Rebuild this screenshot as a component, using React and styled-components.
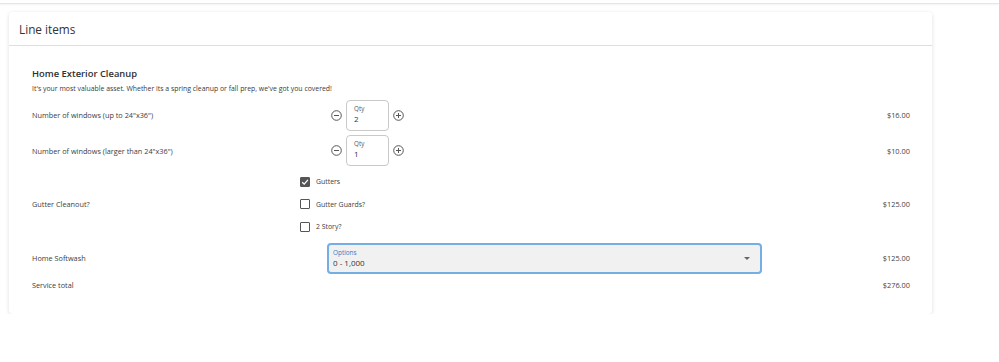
import React from "react";
import styled, { createGlobalStyle } from "styled-components";

const Global = createGlobalStyle`
  body {
    margin: 0;
    background: #fff;
    font-family: "Open Sans", "Liberation Sans", sans-serif;
    color: #3a3a3a;
  }
`;

// Barra fina de arriba
const TopStrip = styled.div`
  height: 3px;
  border-bottom: 1px solid #e6e6e6;
  box-shadow: 0 1px 2px rgba(0, 0, 0, 0.05);
`;

const Page = styled.div`
  padding: 8px 0 0 9px;
`;

const Card = styled.section`
  width: 923px;
  background: #fff;
  border-radius: 4px;
  box-shadow: 0 1px 4px rgba(0, 0, 0, 0.13);
`;

const CardHeader = styled.header`
  height: 33px;
  display: flex;
  align-items: center;
  padding-left: 10px;
  border-bottom: 1px solid #dedede;
  font-size: 11.8px;
  color: #333;
`;

const CardBody = styled.div`
  padding: 21px 22px 22px 23px;
  display: flex;
  flex-direction: column;
  gap: 4.5px;
`;

const Intro = styled.div`
  margin-bottom: 1px;
`;

const ItemTitle = styled.h2`
  margin: 0;
  font-size: 9.4px;
  line-height: 14px;
  font-weight: 600;
  color: #2f2f2f;
`;

const ItemDesc = styled.p`
  margin: 3px 0 0;
  font-size: 6.9px;
  line-height: 10px;
  color: #3a3a3a;
`;

const Row = styled.div`
  display: grid;
  grid-template-columns: 268px 1fr auto;
  align-items: center;
  min-height: ${(p) => p.$h || 14}px;
`;

const Label = styled.div`
  font-size: 7.3px;
  color: #3d3d3d;
`;

const Price = styled.div`
  font-size: 7.4px;
  color: #444;
  text-align: right;
`;

const Stepper = styled.div`
  display: flex;
  align-items: center;
  gap: 4px;
  margin-left: 31px;
`;

const IconBtn = styled.button`
  border: none;
  background: none;
  padding: 0;
  width: 11px;
  height: 11px;
  display: flex;
  cursor: pointer;
`;

const QtyBox = styled.div`
  width: 43px;
  height: 31px;
  box-sizing: border-box;
  border: 1px solid #c9c9c9;
  border-radius: 4px;
  padding: 4px 0 0 7px;
  display: flex;
  flex-direction: column;
`;

const TinyLabel = styled.span`
  font-size: ${(p) => p.$size || 6.3}px;
  line-height: 8px;
  color: ${(p) => p.$color || "#555"};
`;

const FieldValue = styled.span`
  font-size: 8px;
  line-height: 12px;
  color: #333;
`;

const CheckList = styled.div`
  display: flex;
  flex-direction: column;
`;

const CheckRow = styled.label`
  height: 22.5px;
  display: flex;
  align-items: center;
  gap: 6px;
  font-size: 6.9px;
  color: #3d3d3d;
`;

const Box = styled.span`
  width: 10px;
  height: 10px;
  box-sizing: border-box;
  border: 1px solid #555;
  border-radius: 1px;
  background: ${(p) => (p.$checked ? "#555" : "#fff")};
  display: flex;
  align-items: center;
  justify-content: center;
`;

const Select = styled.div`
  margin-left: 27px;
  width: 435px;
  height: 31px;
  box-sizing: border-box;
  border: 2px solid #74aee2;
  border-radius: 4px;
  background: #f1f1f1;
  padding: 4px 10px 0 4px;
  display: flex;
  align-items: center;
  justify-content: space-between;
`;

const SelectText = styled.div`
  display: flex;
  flex-direction: column;
  margin-top: -3px;
`;

const Caret = styled.span`
  width: 0;
  height: 0;
  border-left: 3px solid transparent;
  border-right: 3px solid transparent;
  border-top: 3px solid #666;
  margin-top: -3px;
`;

const CircleIcon = ({ plus }) => (
  <svg width="11" height="11" viewBox="0 0 11 11">
    <circle cx="5.5" cy="5.5" r="4.8" fill="none" stroke="#555" strokeWidth="1" />
    <line x1="3" y1="5.5" x2="8" y2="5.5" stroke="#555" strokeWidth="1" />
    {plus && <line x1="5.5" y1="3" x2="5.5" y2="8" stroke="#555" strokeWidth="1" />}
  </svg>
);

const Check = () => (
  <svg width="8" height="8" viewBox="0 0 8 8">
    <path d="M1.2 4.2 L3.2 6.1 L6.9 1.9" fill="none" stroke="#fff" strokeWidth="1.3" />
  </svg>
);

const QtyStepper = ({ value }) => (
  <Stepper>
    <IconBtn aria-label="menos">
      <CircleIcon />
    </IconBtn>
    <QtyBox>
      <TinyLabel>Qty</TinyLabel>
      <FieldValue>{value}</FieldValue>
    </QtyBox>
    <IconBtn aria-label="mas">
      <CircleIcon plus />
    </IconBtn>
  </Stepper>
);

const gutters = [
  { name: "Gutters", checked: true },
  { name: "Gutter Guards?", checked: false },
  { name: "2 Story?", checked: false },
];

export default function App() {
  return (
    <>
      <Global />
      <TopStrip />
      <Page>
        <Card>
          <CardHeader>Line items</CardHeader>
          <CardBody>
            <Intro>
              <ItemTitle>Home Exterior Cleanup</ItemTitle>
              <ItemDesc>
                It's your most valuable asset. Whether its a spring cleanup or fall prep, we've got you covered!
              </ItemDesc>
            </Intro>

            <Row $h={31}>
              <Label>Number of windows (up to 24"x36")</Label>
              <QtyStepper value={2} />
              <Price>$16.00</Price>
            </Row>

            <Row $h={31}>
              <Label>Number of windows (larger than 24"x36")</Label>
              <QtyStepper value={1} />
              <Price>$10.00</Price>
            </Row>

            <Row>
              <Label>Gutter Cleanout?</Label>
              <CheckList>
                {gutters.map((g) => (
                  <CheckRow key={g.name}>
                    <Box $checked={g.checked}>{g.checked && <Check />}</Box>
                    {g.name}
                  </CheckRow>
                ))}
              </CheckList>
              <Price>$125.00</Price>
            </Row>

            <Row $h={31}>
              <Label>Home Softwash</Label>
              <Select>
                <SelectText>
                  <TinyLabel $size={6.4} $color="#2f7dc6">Options</TinyLabel>
                  <FieldValue>0 - 1,000</FieldValue>
                </SelectText>
                <Caret />
              </Select>
              <Price>$125.00</Price>
            </Row>

            <Row>
              <Label>Service total</Label>
              <div />
              <Price>$276.00</Price>
            </Row>
          </CardBody>
        </Card>
      </Page>
    </>
  );
}
